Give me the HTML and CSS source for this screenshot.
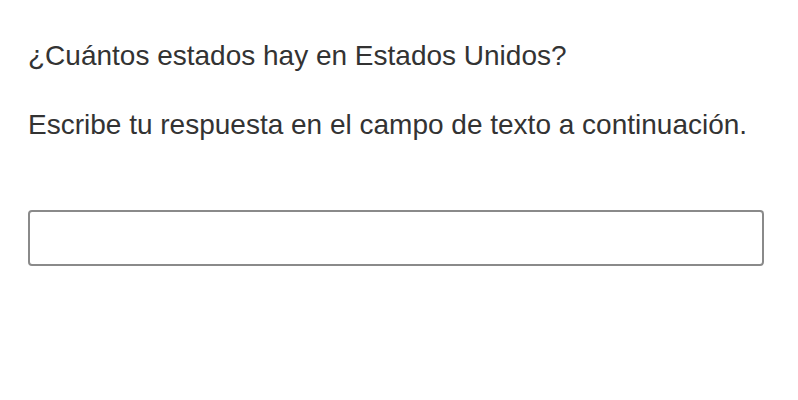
FILE: index.html
```html
<!DOCTYPE html>
<html lang="es">
<head>
<meta charset="utf-8">
<link rel="stylesheet" href="styles.css">
</head>
<body>
<main class="question">
  <p class="prompt">¿Cuántos estados hay en Estados Unidos?</p>
  <p class="instructions">Escribe tu respuesta en el campo de texto a continuación.</p>
  <input class="answer" type="text" aria-label="Respuesta">
</main>
</body>
</html>
```

FILE: styles.css
```css
html, body {
  margin: 0;
  padding: 0;
  background: #ffffff;
}
.question {
  padding: 39px 34px 0 28px;
  font-family: "Liberation Sans", Arial, sans-serif;
  font-size: 28px;
  color: #333333;
  display: flex;
  flex-direction: column;
}
.prompt {
  margin: 0;
  line-height: 34px;
}
.instructions {
  margin: 35px 0 0 0;
  line-height: 34px;
}
.answer {
  margin-top: 68px;
  box-sizing: border-box;
  width: 736px;
  height: 56px;
  border: 2px solid #8a8a8a;
  border-radius: 4px;
  background: #fff;
  font-family: inherit;
  font-size: 24px;
  padding: 0 12px;
  outline: none;
}
```
